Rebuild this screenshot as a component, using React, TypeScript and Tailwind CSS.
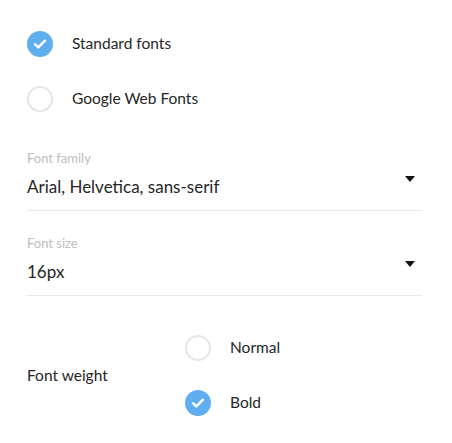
import React from 'react';

const Check = () => (
  <svg viewBox="0 0 26 26" className="w-[26px] h-[26px]">
    <circle cx="13" cy="13" r="13" fill="#5eaef0" />
    <path d="M8.2 13.4l3.1 3 6.5-6.6" fill="none" stroke="#fff" strokeWidth="2.6" strokeLinecap="round" strokeLinejoin="round" />
  </svg>
);

const Radio = ({ checked }: { checked: boolean }) =>
  checked ? <Check /> : <div className="w-[26px] h-[26px] rounded-full border-2 border-[#e6e6e6]" />;

const Caret = () => (
  <svg viewBox="0 0 10 6" className="block w-[10px] h-[6px]">
    <path d="M0 0h10L5 6z" fill="#111" />
  </svg>
);

const Select = ({ label, value }: { label: string; value: string }) => (
  <div className="flex flex-col border-b border-[#e8e8e8]">
    <span className="text-[13px] leading-4 text-[#bdbdbd]">{label}</span>
    <div className="flex items-start justify-between h-[44px] pr-[7px]">
      <span className="mt-[9px] text-[17px] leading-6 text-[#262626]">{value}</span>
      <span className="mt-[10px]"><Caret /></span>
    </div>
  </div>
);

export default function App() {
  return (
    <div className="w-[452px] h-[443px] bg-white pl-[27px] pr-[30px] pt-[31px]" style={{ fontFamily: 'Lato, "Noto Sans", sans-serif' }}>
      <div className="flex flex-col gap-[29px]">
        <label className="flex items-center gap-[19px]">
          <Radio checked />
          <span className="text-[15.5px] text-[#262626]">Standard fonts</span>
        </label>
        <label className="flex items-center gap-[19px]">
          <Radio checked={false} />
          <span className="text-[15.5px] text-[#262626]">Google Web Fonts</span>
        </label>
      </div>

      <div className="mt-[38px] flex flex-col gap-[24px]">
        <Select label="Font family" value="Arial, Helvetica, sans-serif" />
        <Select label="Font size" value="16px" />
      </div>

      <div className="mt-[39px] flex items-center">
        <span className="w-[158px] text-[15.5px] text-[#262626]">Font weight</span>
        <div className="flex flex-col gap-[29px]">
          <label className="flex items-center gap-[19px]">
            <Radio checked={false} />
            <span className="text-[15.5px] text-[#262626]">Normal</span>
          </label>
          <label className="flex items-center gap-[19px]">
            <Radio checked />
            <span className="text-[15.5px] text-[#262626]">Bold</span>
          </label>
        </div>
      </div>
    </div>
  );
}
